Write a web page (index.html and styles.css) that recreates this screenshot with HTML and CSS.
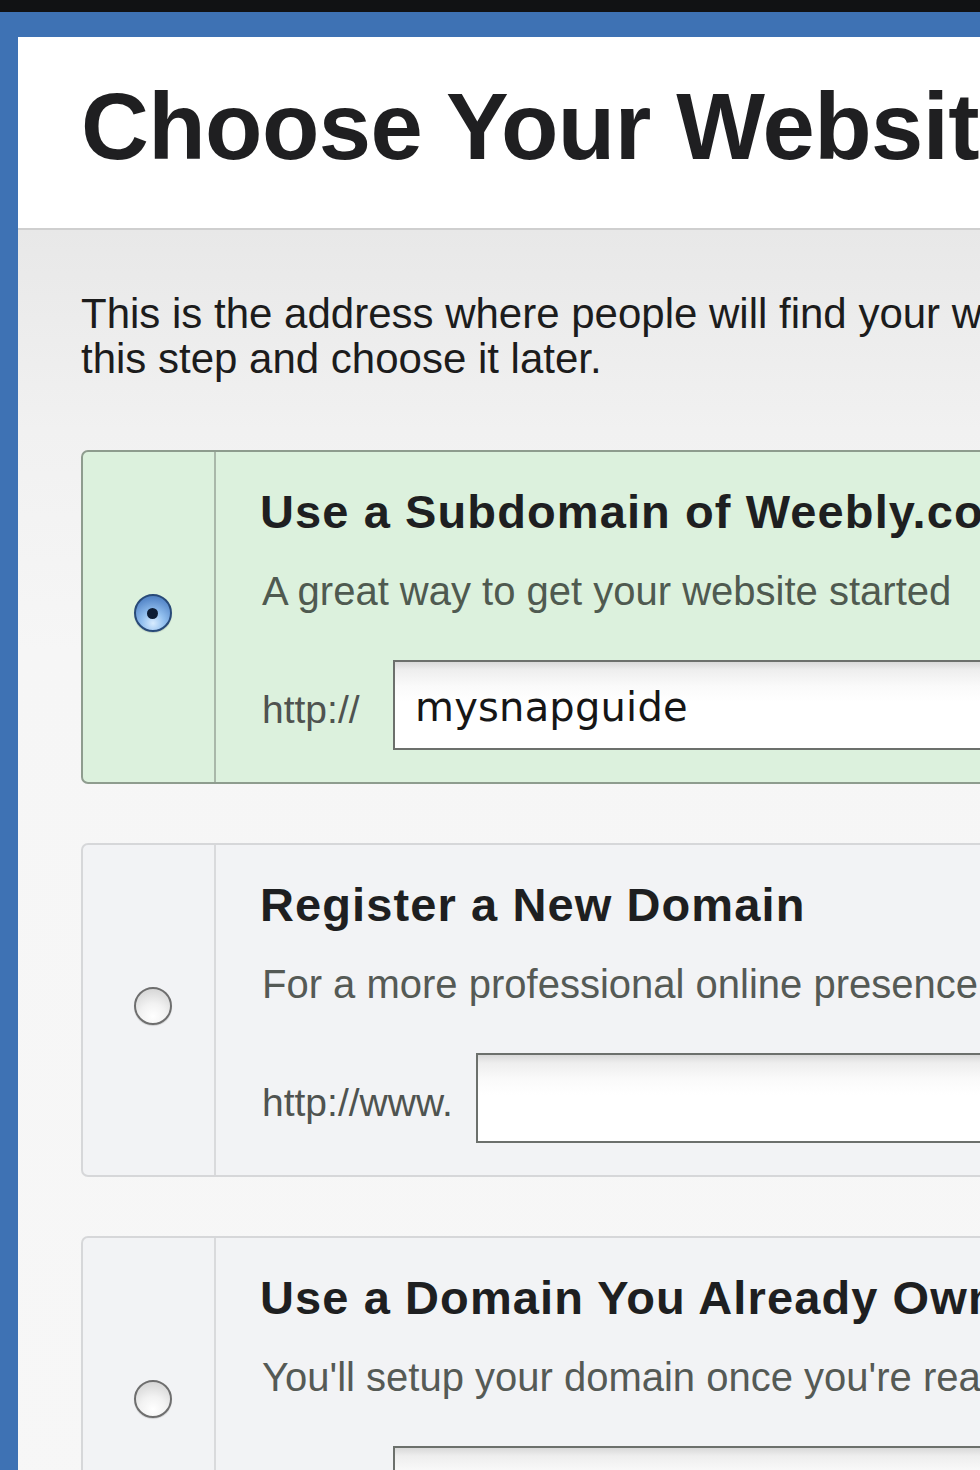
FILE: index.html
```html
<!DOCTYPE html>
<html lang="en">
<head>
<meta charset="utf-8">
<title>Choose Your Website Address</title>
<link rel="stylesheet" href="styles.css">
</head>
<body>
<div class="topbar"></div>
<div class="frame">
  <div class="panel">
    <header class="header">
      <h1 class="heading">Choose Your Website Address</h1>
    </header>
    <main class="content">
      <p class="intro">This is the address where people will find your website. You can skip<br>this step and choose it later.</p>

      <section class="card card-selected">
        <div class="card-radio"><span class="radio radio-on"></span></div>
        <div class="card-body">
          <h2 class="card-title">Use a Subdomain of Weebly.com</h2>
          <p class="card-sub">A great way to get your website started</p>
          <div class="field-row">
            <span class="field-label">http://</span>
            <div class="field"><span class="field-value">mysnapguide</span></div>
          </div>
        </div>
      </section>

      <section class="card">
        <div class="card-radio"><span class="radio"></span></div>
        <div class="card-body">
          <h2 class="card-title">Register a New Domain</h2>
          <p class="card-sub">For a more professional online presence</p>
          <div class="field-row">
            <span class="field-label">http://www.</span>
            <div class="field"></div>
          </div>
        </div>
      </section>

      <section class="card">
        <div class="card-radio"><span class="radio"></span></div>
        <div class="card-body">
          <h2 class="card-title">Use a Domain You Already Own</h2>
          <p class="card-sub">You'll setup your domain once you're ready to publish</p>
          <div class="field-row">
            <span class="field-label"></span>
            <div class="field"></div>
          </div>
        </div>
      </section>
    </main>
  </div>
</div>
</body>
</html>
```
FILE: styles.css
```css
html, body {
  margin: 0;
  padding: 0;
  overflow: hidden;
  background: #3e72b4;
}
body {
  font-family: "Liberation Sans", Arial, Helvetica, sans-serif;
  color: #222;
}
.topbar {
  height: 12px;
  background: #111214;
}
.frame {
  background: #3e72b4;
  padding: 25px 0 0 18px;
}
.panel {
  width: 1400px;
  background: #fff;
  min-height: 1500px;
}
.header {
  height: 193px;
  box-sizing: border-box;
  padding: 40px 0 0 63px;
  border-bottom: 2px solid #cfcfcf;
  background: #fff;
}
.heading {
  margin: 0;
  font-size: 94px;
  line-height: 100px;
  font-weight: bold;
  color: #1f1f21;
  white-space: nowrap;
  letter-spacing: -0.6px;
}
.content {
  padding: 61px 0 0 63px;
  background: linear-gradient(#e8e8e8 0px, #f1f1f1 200px, #f6f6f6 420px, #f7f7f7 100%);
  min-height: 1300px;
}
.intro {
  margin: 0 0 69px 0;
  font-size: 42px;
  line-height: 45px;
  color: #1c1c1c;
  white-space: nowrap;
}
.card {
  display: grid;
  grid-template-columns: 133px 1fr;
  width: 1200px;
  height: 334px;
  box-sizing: border-box;
  border: 2px solid #d6d7d9;
  border-radius: 7px;
  background: #f2f3f5;
  margin-bottom: 59px;
}
.card-selected {
  background: #dcf1dd;
  border-color: #8e9c8e;
}
.card-radio {
  display: flex;
  align-items: center;
  justify-content: center;
  padding: 0 0 8px 8px;
  border-right: 2px solid #d9dadc;
}
.card-selected .card-radio {
  border-right-color: #a9b8a9;
}
.radio {
  width: 38px;
  height: 38px;
  box-sizing: border-box;
  border-radius: 50%;
  border: 2.5px solid #6e6e6e;
  background: radial-gradient(circle at 50% 80%, #ffffff 0%, #f2f2f2 40%, #cdcdcd 100%);
  box-shadow: 0 1px 1px rgba(0,0,0,0.15);
}
.radio-on {
  position: relative;
  border-color: #284a78;
  background: radial-gradient(circle at 50% 80%, #d8ecff 0%, #93c0ef 35%, #5b8ccc 75%, #3f6eae 100%);
}
.radio-on::after {
  content: "";
  position: absolute;
  left: 50%;
  top: 50%;
  width: 11px;
  height: 11px;
  margin: -5.5px 0 0 -5.5px;
  border-radius: 50%;
  background: #0d1d35;
}
.card-body {
  padding: 32px 0 0 44px;
}
.card-title {
  margin: 0;
  font-size: 47px;
  line-height: 56px;
  font-weight: bold;
  color: #1e1f21;
  letter-spacing: 1.1px;
  white-space: nowrap;
}
.card-sub {
  margin: 27px 0 0 2px;
  font-size: 40px;
  line-height: 48px;
  color: #555a55;
  white-space: nowrap;
}
.card-selected .card-sub {
  color: #4f5a50;
}
.field-row {
  display: flex;
  align-items: center;
  margin-top: 45px;
  margin-left: 2px;
}
.field-label {
  min-width: 108px;
  margin-right: 23px;
  padding-top: 10px;
  font-size: 39px;
  line-height: 48px;
  color: #4f5350;
  white-space: nowrap;
}
.field {
  flex: 1;
  height: 90px;
  box-sizing: border-box;
  border: 2px solid #6c706c;
  background: linear-gradient(#d9d9d9 0px, #eeeeee 8px, #fafafa 24px, #ffffff 40px);
  display: flex;
  align-items: center;
  padding: 4px 0 0 20px;
}
.field-value {
  font-family: "DejaVu Sans", "Lucida Grande", sans-serif;
  font-size: 40px;
  color: #161616;
  letter-spacing: 0.2px;
}
```
